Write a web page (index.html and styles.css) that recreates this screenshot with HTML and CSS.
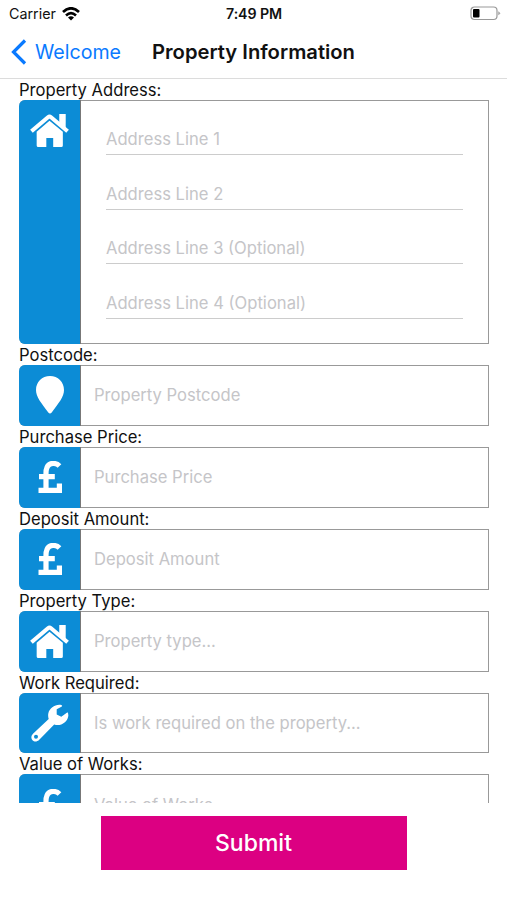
FILE: index.html
```html
<!DOCTYPE html>
<html lang="en">
<head>
<meta charset="utf-8">
<title>Property Information</title>
<link rel="stylesheet" href="styles.css">
</head>
<body>
<svg class="defs" aria-hidden="true">
  <symbol id="house" viewBox="0 0 38 34">
    <path d="M19 7.500 32 18.300V31.500Q32 33 30.500 33H22.600V24.300H15.900V33H8Q6.500 33 6.500 31.500V18.300Z"/>
    <path d="M1.400 17.700 17.500 4.100Q19 2.900 20.500 4.100L36.600 17.700" fill="none" stroke="#fff" stroke-width="4"/>
    <path d="M28.500 1H34.800V15L28.500 10Z"/>
  </symbol>
  <symbol id="pin" viewBox="0 0 28 38">
    <path d="M14 0C6 0 0 6 0 14C0 21 5 26.500 12.300 36.500Q14 38.600 15.700 36.500C23 26.500 28 21 28 14C28 6 22 0 14 0Z"/>
  </symbol>
  <symbol id="pound" viewBox="0 0 24 32">
    <path d="M21.500 5C18.500 2 14 1.700 11.300 3.500C7.500 6 8 10 8 14V29M1 15.600H16.800M.5 29.300H21.400V22.500" fill="none" stroke="#fff" stroke-width="5.200"/>
  </symbol>
  <symbol id="wrench" viewBox="0 0 38 38">
    <path fill-rule="evenodd" d="M29.500.8C24 .2 18.500 3.800 17.300 9.500Q16.800 12.200 17.700 15L2 29.800C-.2 32 0 34.800 1.500 36.200C3.100 37.900 6 38 8 36L23.200 20.500C29.500 22.700 36.300 18.500 37.300 12Q37.500 9.300 36.500 8.300L30.300 12.700L25.700 10.400V5.300L30.900 2.400Q31.800 1.300 29.500.8ZM5 30.800A2 2 0 1 1 5 34.800A2 2 0 1 1 5 30.800Z"/>
  </symbol>
</svg>
<div class="status">
  <div class="carrier"><span>Carrier</span>
    <svg class="wifi" viewBox="0 0 18 14"><g fill="none" stroke="#000" stroke-width="2.700"><path d="M1 5Q9-2.400 17 5"/><path d="M4 8.400Q9 4 14 8.400"/></g><path d="M6 10.600Q9 8 12 10.600L9 13.600Z"/></svg>
  </div>
  <div class="time">7:49 PM</div>
  <svg class="battery" viewBox="0 0 31 15"><rect x="1" y="1" width="26" height="12.500" rx="3.500" fill="none" stroke="#999" stroke-width="1.200"/><rect x="3" y="3" width="6.500" height="8.500" rx="1"/><path d="M28.200 5.200Q32 7.200 28.200 9.200Z" fill="#aaa"/></svg>
</div>
<header class="nav">
  <a class="back"><svg class="chevron" viewBox="0 0 16 26"><path d="M14 1.500 2.500 13 14 24.500"/></svg><span>Welcome</span></a>
  <h1>Property Information</h1>
</header>
<main class="form">
  <label>Property Address:</label>
  <div class="field address">
    <div class="tile"><svg class="house"><use href="#house"/></svg></div>
    <div class="lines">
      <div class="line"><span>Address Line 1</span></div>
      <div class="line"><span>Address Line 2</span></div>
      <div class="line"><span>Address Line 3 (Optional)</span></div>
      <div class="line"><span>Address Line 4 (Optional)</span></div>
    </div>
  </div>
  <label>Postcode:</label>
  <div class="field"><div class="tile"><svg class="pin"><use href="#pin"/></svg></div><div class="input"><span>Property Postcode</span></div></div>
  <label>Purchase Price:</label>
  <div class="field"><div class="tile"><svg class="pound"><use href="#pound"/></svg></div><div class="input"><span>Purchase Price</span></div></div>
  <label>Deposit Amount:</label>
  <div class="field"><div class="tile"><svg class="pound"><use href="#pound"/></svg></div><div class="input"><span>Deposit Amount</span></div></div>
  <label>Property Type:</label>
  <div class="field"><div class="tile"><svg class="house"><use href="#house"/></svg></div><div class="input"><span>Property type...</span></div></div>
  <label>Work Required:</label>
  <div class="field"><div class="tile"><svg class="wrench"><use href="#wrench"/></svg></div><div class="input"><span>Is work required on the property...</span></div></div>
  <label>Value of Works:</label>
  <div class="field"><div class="tile"><svg class="pound"><use href="#pound"/></svg></div><div class="input"><span>Value of Works</span></div></div>
</main>
<footer><button class="submit">Submit</button></footer>
</body>
</html>
```
FILE: styles.css
```css
* { box-sizing: border-box; }
body {
  margin: 0;
  height: 900px;
  overflow: hidden;
  display: flex;
  flex-direction: column;
  background: #fff;
  color: #111;
  font-family: Inter, "Liberation Sans", sans-serif;
  white-space: nowrap;
}
svg { display: block; flex: none; }
.defs { display: none; }
.status {
  height: 27px;
  display: grid;
  grid-template-columns: 1fr auto 1fr;
  align-items: center;
  padding: 0 6px;
  font-size: 14.3px;
}
.carrier { display: flex; align-items: center; gap: 6px; padding-left: 3px; }
.wifi { width: 18px; height: 14px; }
.time { font-weight: 600; font-size: 14.2px; letter-spacing: -0.1px; padding-left: 1px; }
.battery { width: 31px; height: 15px; justify-self: end; }
.nav {
  height: 52px;
  display: flex;
  align-items: center;
  padding: 0 0 2px 11px;
  border-bottom: 1px solid #dcdcdc;
}
.back { display: flex; align-items: center; gap: 8px; width: 141px; color: #0a7aff; font-size: 19.6px; }
.chevron { width: 16px; height: 26px; fill: none; stroke: #0a7aff; stroke-width: 3.2; }
h1 { margin: 0; font-size: 20.2px; font-weight: 600; }
.form { height: 724px; flex: none; overflow: hidden; padding: 0 18px 0 19px; }
label { display: block; height: 21px; line-height: 22px; font-size: 16.6px; }
.field {
  display: flex;
  height: 60.9px;
  border: 1px solid #999;
  border-left: 0;
  border-radius: 6px 0 0 6px;
}
.address { height: 244px; }
.tile {
  width: 62px;
  flex: none;
  margin: -1px 0;
  display: flex;
  align-items: center;
  justify-content: center;
  background: #0c8cd6;
  border-right: 1px solid #777;
  border-radius: 6px 0 0 6px;
  fill: #fff;
}
.address .tile { align-items: flex-start; padding-top: 13px; }
.house { width: 39px; height: 35px; }
.pin { width: 28px; height: 38px; }
.pound { width: 24px; height: 32px; }
.wrench { width: 38px; height: 38px; }
.input { display: flex; align-items: center; padding-left: 13px; color: #c5c5c8; font-size: 16.6px; }
.lines { flex: 1; padding: 0 25px; color: #c5c5c8; font-size: 16.6px; }
.line { height: 54.4px; display: flex; align-items: flex-end; padding-bottom: 5px; border-bottom: 1.500px solid #ccc; }
footer { padding-top: 13px; display: flex; justify-content: center; }
.submit {
  width: 306px;
  height: 54px;
  border: 0;
  background: #dc0082;
  color: #fff;
  font: 500 23px Inter, "Liberation Sans", sans-serif;
}
```
